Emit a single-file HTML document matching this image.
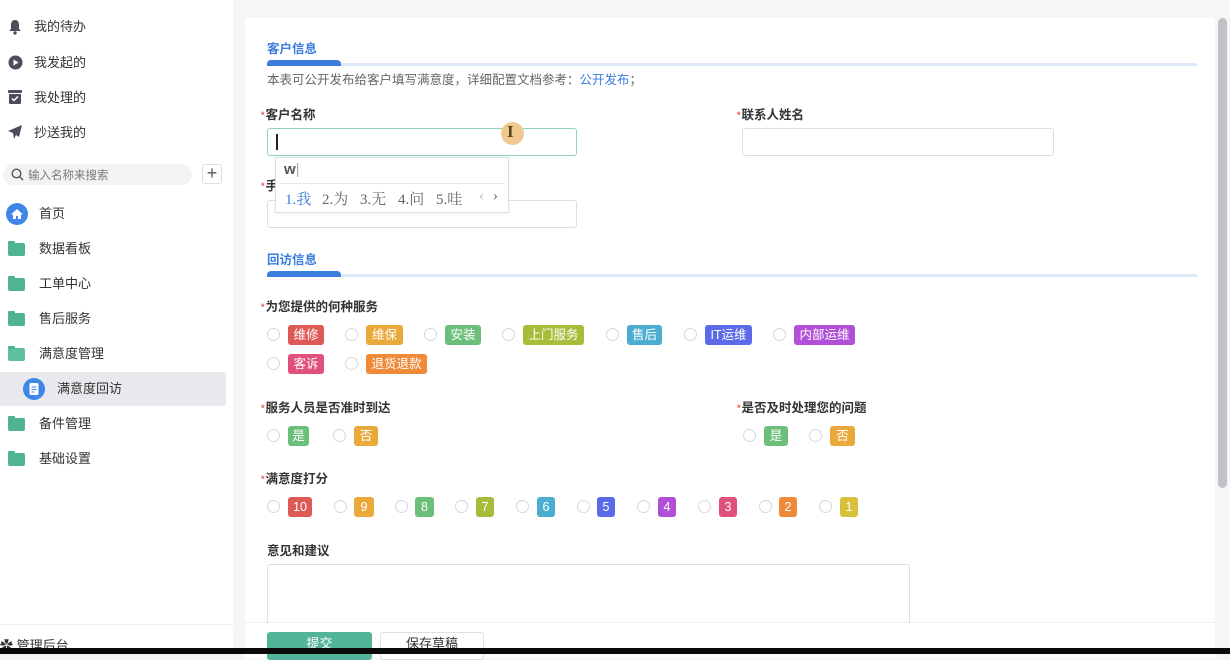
<!DOCTYPE html>
<html><head><meta charset="utf-8"><style>
*{margin:0;padding:0;box-sizing:border-box}
body{width:1230px;height:654px;overflow:hidden;background:#f5f6f8;font-family:"Liberation Sans","Noto Sans CJK SC",sans-serif;position:relative;color:#333}
.a{position:absolute;white-space:nowrap}
.side{position:absolute;left:0;top:0;width:233px;height:654px;background:#fff}
.si{position:absolute;left:34px;font-size:13px;color:#333;line-height:16px}
.fold{position:absolute;left:8px;width:17px;height:13px;background:#4fb394;border-radius:2px}
.fold:before{content:"";position:absolute;left:0;top:-2px;width:7px;height:3px;background:#4fb394;border-radius:1px 1px 0 0}
.main{position:absolute;left:245px;top:18px;width:970px;height:640px;background:#fff}
.lb{position:absolute;font-size:12.5px;font-weight:bold;color:#333;line-height:16px}
.lb i{color:#e55;font-style:normal;font-size:9px;vertical-align:top;margin-right:1px}
.inp{position:absolute;border:1px solid #dcdfe6;border-radius:3px;background:#fff}
.r{position:absolute;width:13px;height:13px;border:1px solid #d6d8dc;border-radius:50%;background:#fff}
.t{position:absolute;height:20px;border-radius:3px;color:#fff;font-size:12.5px;line-height:20px;text-align:center}
.c{position:absolute;top:188px;font-size:15px;color:#666;font-family:'Liberation Serif','Noto Serif CJK SC',serif}
</style></head><body>
<div class="side">
 <svg class="a" style="left:8px;top:19px" width="14" height="16" viewBox="0 0 14 16"><path d="M7 1C4 1 3 3.5 3 6v4L1 12h12l-2-2V6c0-2.5-1-5-4-5z" fill="#4a4f5a"/><circle cx="7" cy="14" r="1.7" fill="#4a4f5a"/></svg>
 <div class="si" style="top:19px">我的待办</div>
 <svg class="a" style="left:8px;top:55px" width="15" height="15"><circle cx="7.5" cy="7.5" r="7" fill="#4a4f5a"/><path d="M5.5 4.5v6l5-3z" fill="#fff"/></svg>
 <div class="si" style="top:55px">我发起的</div>
 <svg class="a" style="left:8px;top:90px" width="14" height="14"><rect x="0" y="0" width="14" height="3" rx="1" fill="#4a4f5a"/><rect x="1" y="4" width="12" height="10" rx="1" fill="#4a4f5a"/><path d="M4 8.5l2 2 4-4" stroke="#fff" stroke-width="1.5" fill="none"/></svg>
 <div class="si" style="top:90px">我处理的</div>
 <svg class="a" style="left:8px;top:125px" width="14" height="14"><path d="M14 0L0 6l5 2 1 6 2-4 3 2z" fill="#4a4f5a"/></svg>
 <div class="si" style="top:125px">抄送我的</div>
 <div class="a" style="left:3px;top:164px;width:189px;height:21px;background:#f2f3f5;border-radius:11px"></div>
 <svg class="a" style="left:11px;top:168px" width="13" height="13"><circle cx="5.5" cy="5.5" r="4.3" stroke="#555" stroke-width="1.4" fill="none"/><path d="M8.7 8.7l3.3 3.3" stroke="#555" stroke-width="1.4"/></svg>
 <div class="a" style="left:28px;top:167px;font-size:11.5px;color:#777">输入名称来搜索</div>
 <div class="a" style="left:202px;top:164px;width:20px;height:20px;border:1px solid #dcdfe6;border-radius:3px;text-align:center;line-height:17px;font-size:18px;color:#555">+</div>
 <svg class="a" style="left:6px;top:203px" width="22" height="22"><circle cx="11" cy="11" r="11" fill="#3e86e8"/><path d="M5 11.5L11 6l6 5.5h-2V16h-3v-3h-2v3H7v-4.5z" fill="#fff"/></svg>
 <div class="si" style="left:39px;top:206px">首页</div>
 <div class="fold" style="top:243px"></div><div class="si" style="left:39px;top:241px">数据看板</div>
 <div class="fold" style="top:278px"></div><div class="si" style="left:39px;top:276px">工单中心</div>
 <div class="fold" style="top:313px"></div><div class="si" style="left:39px;top:311px">售后服务</div>
 <div class="fold" style="top:348px;background:#5ebfa0"></div><div class="si" style="left:39px;top:346px">满意度管理</div>
 <div class="a" style="left:0;top:372px;width:226px;height:34px;background:#e8e9ec;border-radius:0 3px 3px 0"></div>
 <svg class="a" style="left:23px;top:378px" width="22" height="22"><circle cx="11" cy="11" r="11" fill="#3e86e8"/><rect x="6.5" y="5" width="9" height="12" rx="1.5" fill="#fff"/><path d="M8.5 9h5M8.5 11.5h5M8.5 14h3" stroke="#3e86e8" stroke-width="1"/></svg>
 <div class="si" style="left:57px;top:381px">满意度回访</div>
 <div class="fold" style="top:418px"></div><div class="si" style="left:39px;top:416px">备件管理</div>
 <div class="fold" style="top:453px"></div><div class="si" style="left:39px;top:451px">基础设置</div>
 <div class="a" style="left:0;top:624px;width:233px;height:1px;background:#eceef1"></div>
 <div class="si" style="left:0;top:638px">✿ 管理后台</div>
</div>
<div class="main"></div>
<div class="a" style="left:267px;top:38px;font-size:12.5px;font-weight:bold;color:#3b7ddd">客户信息</div>
<div class="a" style="left:267px;top:63px;width:930px;height:3px;background:#dde8f8"></div>
<div class="a" style="left:267px;top:60px;width:74px;height:6px;background:#3b7ddd;border-radius:4px 4px 0 0"></div>
<div class="a" style="left:267px;top:69px;font-size:12.5px;color:#666">本表可公开发布给客户填写满意度，详细配置文档参考：<span style="color:#3b7ddd">公开发布</span>；</div>
<div class="lb" style="left:261px;top:107px"><i>*</i>客户名称</div>
<div class="inp" style="left:267px;top:128px;width:310px;height:28px;border-color:#8fd3b8"></div>
<div class="a" style="left:276px;top:134px;width:1.5px;height:16px;background:#222"></div>
<div class="lb" style="left:737px;top:107px"><i>*</i>联系人姓名</div>
<div class="inp" style="left:742px;top:128px;width:312px;height:28px"></div>
<div class="lb" style="left:261px;top:178px"><i>*</i>手</div>
<div class="inp" style="left:267px;top:200px;width:310px;height:28px"></div>
<div class="a" style="left:275px;top:157px;width:234px;height:56px;background:#fff;border:1px solid #dde0e6;box-shadow:0 1px 3px rgba(0,0,0,.08)"></div>
<div class="a" style="left:284px;top:161px;font-size:15px;font-weight:bold;color:#555">w<span style="font-weight:normal;color:#aaa">|</span></div>
<div class="a" style="left:279px;top:183px;width:226px;height:1px;background:#e6e8ec"></div>
<div class="c" style="left:285px;color:#3b7ddd">1.我</div>
<div class="c" style="left:322px">2.为</div>
<div class="c" style="left:360px">3.无</div>
<div class="c" style="left:398px">4.问</div>
<div class="c" style="left:436px">5.哇</div>
<div class="c" style="left:479px;color:#bbb">‹</div>
<div class="c" style="left:493px">›</div>
<div class="a" style="left:501px;top:122px;width:23px;height:23px;border-radius:50%;background:#f0c98f"></div>
<div class="a" style="left:507px;top:122px;font-size:17px;font-weight:bold;color:#5a4520;font-family:'Liberation Serif',serif">I</div>

<div class="a" style="left:267px;top:249px;font-size:12.5px;font-weight:bold;color:#3b7ddd">回访信息</div>
<div class="a" style="left:267px;top:274px;width:930px;height:3px;background:#dde8f8"></div>
<div class="a" style="left:267px;top:271px;width:74px;height:6px;background:#3b7ddd;border-radius:4px 4px 0 0"></div>

<div class="lb" style="left:261px;top:299px"><i>*</i>为您提供的何种服务</div>
<div class="r" style="left:267px;top:328px"></div><div class="t" style="left:288px;top:325px;width:36px;background:#dd5a57">维修</div>
<div class="r" style="left:345px;top:328px"></div><div class="t" style="left:366px;top:325px;width:37px;background:#e9aa3b">维保</div>
<div class="r" style="left:424px;top:328px"></div><div class="t" style="left:445px;top:325px;width:36px;background:#6cbf7a">安装</div>
<div class="r" style="left:502px;top:328px"></div><div class="t" style="left:523px;top:325px;width:61px;background:#a8bc3a">上门服务</div>
<div class="r" style="left:606px;top:328px"></div><div class="t" style="left:627px;top:325px;width:35px;background:#4baed0">售后</div>
<div class="r" style="left:684px;top:328px"></div><div class="t" style="left:705px;top:325px;width:47px;background:#5a6ae8">IT运维</div>
<div class="r" style="left:773px;top:328px"></div><div class="t" style="left:794px;top:325px;width:61px;background:#b24fd8">内部运维</div>
<div class="r" style="left:267px;top:357px"></div><div class="t" style="left:288px;top:354px;width:36px;background:#df507a">客诉</div>
<div class="r" style="left:345px;top:357px"></div><div class="t" style="left:366px;top:354px;width:61px;background:#ee8a38">退货退款</div>

<div class="lb" style="left:261px;top:400px"><i>*</i>服务人员是否准时到达</div>
<div class="r" style="left:267px;top:429px"></div><div class="t" style="left:288px;top:426px;width:21px;background:#6cbf7a">是</div>
<div class="r" style="left:333px;top:429px"></div><div class="t" style="left:354px;top:426px;width:24px;background:#e9aa3b">否</div>
<div class="lb" style="left:737px;top:400px"><i>*</i>是否及时处理您的问题</div>
<div class="r" style="left:743px;top:429px"></div><div class="t" style="left:764px;top:426px;width:24px;background:#6cbf7a">是</div>
<div class="r" style="left:809px;top:429px"></div><div class="t" style="left:830px;top:426px;width:25px;background:#e9aa3b">否</div>

<div class="lb" style="left:261px;top:471px"><i>*</i>满意度打分</div>
<div class="r" style="left:267px;top:500px"></div><div class="t" style="left:288px;top:497px;width:24px;background:#dd5a57">10</div>
<div class="r" style="left:334px;top:500px"></div><div class="t" style="left:354px;top:497px;width:20px;background:#e9aa3b">9</div>
<div class="r" style="left:395px;top:500px"></div><div class="t" style="left:415px;top:497px;width:19px;background:#6cbf7a">8</div>
<div class="r" style="left:455px;top:500px"></div><div class="t" style="left:476px;top:497px;width:18px;background:#a8bc3a">7</div>
<div class="r" style="left:516px;top:500px"></div><div class="t" style="left:537px;top:497px;width:18px;background:#4baed0">6</div>
<div class="r" style="left:577px;top:500px"></div><div class="t" style="left:597px;top:497px;width:18px;background:#5a6ae8">5</div>
<div class="r" style="left:637px;top:500px"></div><div class="t" style="left:658px;top:497px;width:18px;background:#b24fd8">4</div>
<div class="r" style="left:698px;top:500px"></div><div class="t" style="left:719px;top:497px;width:18px;background:#df507a">3</div>
<div class="r" style="left:759px;top:500px"></div><div class="t" style="left:779px;top:497px;width:18px;background:#ee8a38">2</div>
<div class="r" style="left:819px;top:500px"></div><div class="t" style="left:840px;top:497px;width:18px;background:#d8c03a">1</div>

<div class="lb" style="left:267px;top:543px">意见和建议</div>
<div class="inp" style="left:267px;top:564px;width:643px;height:70px"></div>
<div class="a" style="left:245px;top:622px;width:970px;height:1px;border-top:1px dotted #e4e6ea"></div>
<div class="a" style="left:245px;top:623px;width:970px;height:31px;background:#fff"></div>
<div class="a" style="left:267px;top:632px;width:105px;height:28px;background:#52b59a;border-radius:3px;color:#fff;font-size:13px;text-align:center;line-height:24px">提交</div>
<div class="a" style="left:380px;top:632px;width:104px;height:28px;border:1px solid #dcdfe6;border-radius:3px;background:#fff;color:#333;font-size:13px;text-align:center;line-height:22px">保存草稿</div>
<div class="a" style="left:1218px;top:18px;width:9px;height:470px;background:#c1c2c5;border-radius:5px"></div>
<div class="a" style="left:0;top:648px;width:1230px;height:6px;background:#0a0a0a"></div>
</body></html>
